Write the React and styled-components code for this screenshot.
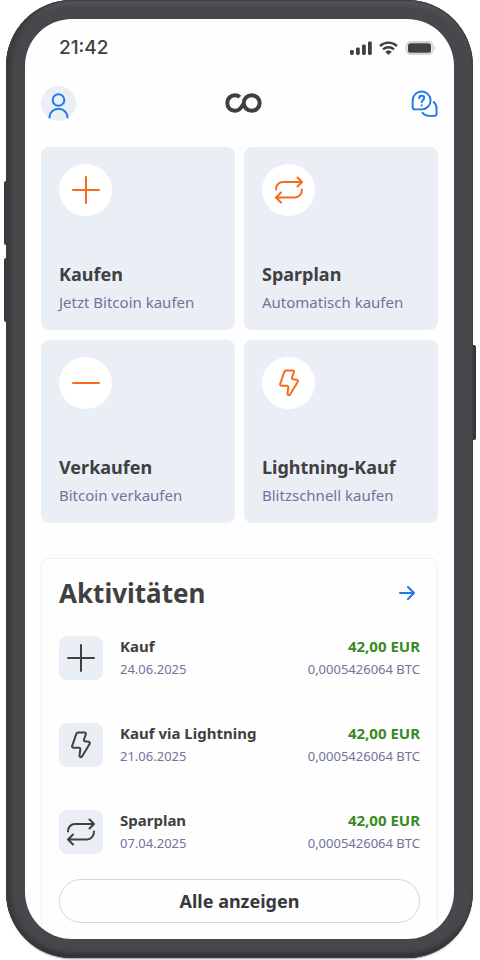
import styled, { createGlobalStyle } from "styled-components";

const GlobalStyle = createGlobalStyle`
  * {
    box-sizing: border-box;
  }
  body {
    margin: 0;
    background-color: #fff;
    font-family: "Noto Sans", sans-serif;
    color: #404041;
  }
  button {
    font: inherit;
    color: inherit;
    cursor: pointer;
  }
`;

const PlusIcon = () => (
  <Icon viewBox="0 0 28 28" $size={28}>
    <path d="M14 1v26M1 14h26" />
  </Icon>
);

const MinusIcon = () => (
  <Icon viewBox="0 0 28 28" $size={28}>
    <path d="M1 14h26" />
  </Icon>
);

const RepeatIcon = () => (
  <Icon viewBox="0 0 28 28" $size={28}>
    <path d="M1 13.500C1 9 4 6 8 6h18.500M22.500 1.500L27 6l-4.500 4.500" />
    <path d="M27 13.500c0 4.500-3 8-7 8H1.500M6 16.500l-5 5 5 5" />
  </Icon>
);

const BoltIcon = () => (
  <Icon viewBox="0 0 28 28" $size={28}>
    <path d="M11 1.500h6.500c1.200 0 1.700.9 1.300 1.800L17 8.500c-.3.900.1 1.500 1 1.700l3.600.6c1.200.2 1.700 1.200 1 2.200l-7.400 12.200c-1 1.600-2.900 1.100-2.700-.6l.8-6.300c.1-1-.4-1.500-1.300-1.500H6.800c-1.500 0-2-.9-1.600-2L9.400 2.700c.3-.8.800-1.200 1.600-1.200z" />
  </Icon>
);

const tiles = [
  { title: "Kaufen", text: "Jetzt Bitcoin kaufen", icon: PlusIcon },
  { title: "Sparplan", text: "Automatisch kaufen", icon: RepeatIcon },
  { title: "Verkaufen", text: "Bitcoin verkaufen", icon: MinusIcon },
  { title: "Lightning-Kauf", text: "Blitzschnell kaufen", icon: BoltIcon },
];

const activities = [
  { title: "Kauf", date: "24.06.2025", icon: PlusIcon },
  { title: "Kauf via Lightning", date: "21.06.2025", icon: BoltIcon },
  { title: "Sparplan", date: "07.04.2025", icon: RepeatIcon },
];

function StatusBar() {
  return (
    <Status>
      <Time>21:42</Time>
      <StatusIcons viewBox="0 0 86 16" aria-hidden="true">
        <g fill="#404041">
          <rect x="0" y="10" width="3.800" height="5" rx="1.400" />
          <rect x="6" y="7.500" width="3.800" height="7.500" rx="1.400" />
          <rect x="12" y="4.500" width="3.800" height="10.500" rx="1.400" />
          <rect x="18" y="1.500" width="3.800" height="13.500" rx="1.400" />
          <path d="M38.500 15l-3.300-3.300a4.900 4.900 0 0 1 6.600 0z" />
        </g>
        <g fill="none" stroke="#404041" strokeWidth="2.400">
          <path d="M30 6a12.500 12.500 0 0 1 17 0" />
          <path d="M33 9.400a8.200 8.200 0 0 1 11 0" />
        </g>
        <rect x="56.500" y="2" width="26" height="12" rx="4" fill="none" stroke="#d4d3d1" strokeWidth="2" />
        <rect x="58" y="3.200" width="23" height="9.600" rx="2.600" fill="#404041" />
        <path d="M84 6q3 2 0 4z" fill="#cdccca" />
      </StatusIcons>
    </Status>
  );
}

function Header() {
  return (
    <TopBar>
      <ProfileButton aria-label="Profil">
        <Icon viewBox="0 0 35 35" $size={35}>
          <circle cx="17.500" cy="14" r="5.800" />
          <path d="M8.500 31.500v-.7a9 8 0 0 1 18 0v.7" />
        </Icon>
      </ProfileButton>
      <Logo viewBox="0 0 37 20" role="img" aria-label="Coinfinity">
        <path d="M14.800 4.200C13.500 2.900 12 2.300 10 2.300C5.400 2.300 2.300 5.600 2.300 10s3.100 7.700 7.700 7.700c4 0 6.200-2.500 8-6.500" />
        <ellipse cx="26.700" cy="10" rx="8" ry="7.700" />
      </Logo>
      <HelpButton aria-label="Hilfe">
        <Icon viewBox="0 0 28 28" $size={27}>
          <path d="M11 1.500a9.300 9.300 0 1 1 0 18.600H4.200A2.500 2.500 0 0 1 1.700 17.600V10.800A9.300 9.300 0 0 1 11 1.500z" />
          <path d="M8.500 8.600c0-1.700 1-2.700 2.600-2.700 1.500 0 2.600 1 2.600 2.400 0 2.200-2.600 2-2.600 4.400" />
          <path d="M11.100 15.800v.2" />
          <path d="M23.500 12.500c2 1.600 3 3.700 3 6.300v5.700a2.300 2.300 0 0 1-2.300 2.300h-6c-2.700 0-4.800-1.200-6.200-3.200" />
        </Icon>
      </HelpButton>
    </TopBar>
  );
}

function Activities() {
  return (
    <Panel>
      <PanelHead>
        <h2>Aktivitäten</h2>
        <ArrowLink href="#aktivitaeten" aria-label="Zu den Aktivitäten">
          <Icon viewBox="0 0 16 16" $size={16}>
            <path d="M1 8h14M9 2l6 6-6 6" />
          </Icon>
        </ArrowLink>
      </PanelHead>
      <List>
        {activities.map(({ title, date, icon: Glyph }) => (
          <Row key={date}>
            <RowIcon>
              <Glyph />
            </RowIcon>
            <RowText>
              <RowTitle>{title}</RowTitle>
              <RowNote>{date}</RowNote>
            </RowText>
            <Amount>
              <RowTitle $positive>42,00 EUR</RowTitle>
              <RowNote>0,0005426064 BTC</RowNote>
            </Amount>
          </Row>
        ))}
      </List>
      <AllButton>Alle anzeigen</AllButton>
    </Panel>
  );
}

function App() {
  return (
    <Page>
      <GlobalStyle />
      <Phone>
        <SideKey $side="left" $top={181} $height={64} />
        <SideKey $side="left" $top={258} $height={64} />
        <SideKey $side="right" $top={345} $height={95} />
        <Body>
          <Screen>
            <StatusBar />
            <Header />
            <Tiles>
              {tiles.map(({ title, text, icon: Glyph }) => (
                <Tile key={title}>
                  <TileIcon>
                    <Glyph />
                  </TileIcon>
                  <TileTitle>{title}</TileTitle>
                  <TileText>{text}</TileText>
                </Tile>
              ))}
            </Tiles>
            <Activities />
          </Screen>
        </Body>
      </Phone>
    </Page>
  );
}

const Page = styled.div`
  padding: 0 7px 2px 6px;
  overflow: hidden;
`;

const Phone = styled.div`
  position: relative;
`;

const Body = styled.div`
  position: relative;
  padding: 19px;
  border-radius: 66px;
  background-color: #47484c;
  box-shadow: inset 0 0 1px 1px #3c3d3f, inset 9px 0 5px -4px #37393b,
    inset 0 -9px 5px -4px #303133, inset 0 9px 5px -4px #535658,
    0 2px 2px -1px #999;
`;

const SideKey = styled.span`
  position: absolute;
  ${({ $side }) => $side}: ${({ $side }) => ($side === "left" ? -2 : -3)}px;
  top: ${({ $top }) => $top}px;
  width: 6px;
  height: ${({ $height }) => $height}px;
  border-radius: 2px;
  background-color: #343537;
`;

const Screen = styled.main`
  padding: 0 16px;
  border-radius: 47px;
  background-color: #fefefe;
  overflow: hidden;
`;

const Status = styled.div`
  display: flex;
  align-items: center;
  justify-content: space-between;
  padding: 16px 2px 0 18px;
  height: 42px;
`;

const Time = styled.span`
  font-family: Inter, sans-serif;
  font-size: 19px;
  font-weight: 500;
  line-height: 24px;
`;

const StatusIcons = styled.svg`
  width: 86px;
  height: 16px;
`;

const Icon = styled.svg.attrs({ "aria-hidden": true })`
  display: block;
  width: ${({ $size }) => $size}px;
  height: ${({ $size }) => $size}px;
  fill: none;
  stroke: currentColor;
  stroke-width: 2;
  stroke-linecap: round;
  stroke-linejoin: round;
`;

const TopBar = styled.header`
  display: flex;
  align-items: center;
  justify-content: space-between;
  height: 86px;
  padding-bottom: 2px;
`;

const ProfileButton = styled.button`
  padding: 0;
  border: 0;
  border-radius: 50%;
  background-color: #eaeff6;
  color: #2079e8;
`;

const HelpButton = styled.button`
  padding: 0;
  border: 0;
  background: none;
  color: #2079e8;
`;

const Logo = styled.svg`
  width: 37px;
  height: 20px;
  fill: none;
  stroke: #404041;
  stroke-width: 4;
`;

const Tiles = styled.section`
  display: grid;
  grid-template-columns: 1fr 1fr;
  gap: 10px 9px;
`;

const Tile = styled.button`
  display: flex;
  flex-direction: column;
  align-items: flex-start;
  padding: 17px 18px 14px;
  border: 0;
  border-radius: 8px;
  background-color: #eaeff6;
  text-align: left;
`;

const TileIcon = styled.span`
  display: grid;
  place-items: center;
  width: 53px;
  height: 52px;
  margin-bottom: 44px;
  border-radius: 50%;
  background-color: #fff;
  color: #f86a1c;
`;

const TileTitle = styled.span`
  font-size: 18px;
  font-weight: 700;
  line-height: 28px;
`;

const TileText = styled.span`
  font-size: 15px;
  line-height: 28px;
  color: #70739a;
  white-space: nowrap;
`;

const Panel = styled.section`
  margin-top: 35px;
  padding: 16px 17px;
  border: 1px solid #edf2f8;
  border-bottom: 0;
  border-radius: 8px 8px 0 0;
`;

const PanelHead = styled.div`
  display: flex;
  align-items: center;
  justify-content: space-between;

  & h2 {
    margin: 0;
    font-size: 26px;
    font-weight: 700;
    line-height: 36px;
  }
`;

const ArrowLink = styled.a`
  padding: 5px;
  color: #2079e8;
`;

const List = styled.ul`
  display: flex;
  flex-direction: column;
  gap: 41px;
  margin: 24px 0;
  padding: 0;
  list-style: none;
`;

const Row = styled.li`
  display: flex;
  align-items: center;
  gap: 17px;
`;

const RowIcon = styled.span`
  display: grid;
  place-items: center;
  width: 44px;
  height: 44px;
  border-radius: 8px;
  background-color: #eaeff6;
`;

const RowText = styled.div`
  flex: 1;
  display: flex;
  flex-direction: column;
`;

const Amount = styled(RowText)`
  flex: none;
  align-items: flex-end;
`;

const RowTitle = styled.span`
  font-size: 15px;
  font-weight: 700;
  line-height: 22px;
  color: ${({ $positive }) => ($positive ? "#388b22" : "inherit")};
`;

const RowNote = styled.span`
  font-size: 13px;
  line-height: 24px;
  color: #70739a;
`;

const AllButton = styled.button`
  display: block;
  width: 100%;
  height: 44px;
  padding: 0;
  border: 1px solid #cfd7e6;
  border-radius: 22px;
  background: none;
  font-size: 18px;
  font-weight: 700;
  color: #37383f;
`;

export default App;
